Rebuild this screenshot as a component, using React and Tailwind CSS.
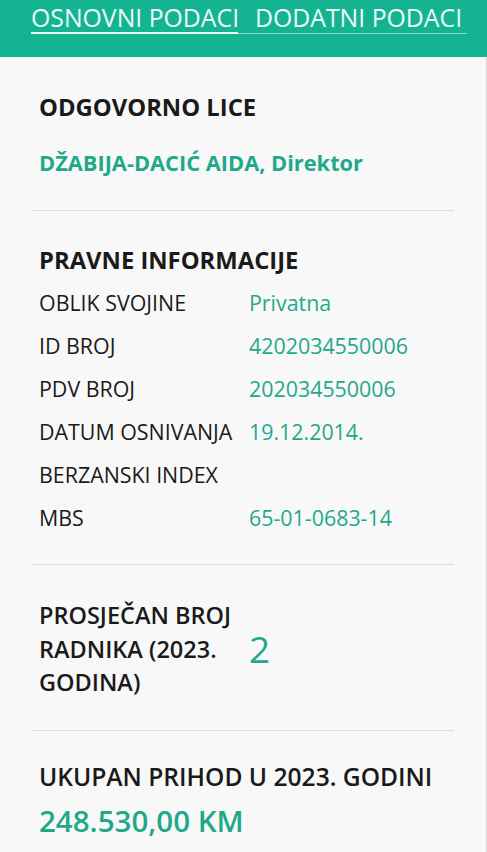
export default function App() {
  const rows = [
    ["OBLIK SVOJINE", "Privatna"],
    ["ID BROJ", "4202034550006"],
    ["PDV BROJ", "202034550006"],
    ["DATUM OSNIVANJA", "19.12.2014."],
    ["BERZANSKI INDEX", ""],
    ["MBS", "65-01-0683-14"],
  ];

  return (
    <div className="h-[852px] w-[487px] overflow-hidden bg-[#f8f8f8] font-['Open_Sans',sans-serif] text-[#1a1a1a]">
      {/* tabs header */}
      <div className="h-[57px] bg-[#14b493] px-[31px] pt-[2px]">
        <div className="flex w-[436px] border-b border-[#8fdcca]">
          <div className="w-[207px] -mb-px border-b-2 border-[#eafaf6] text-[24.8px] leading-[30px] text-[#eafaf6] whitespace-nowrap">
            OSNOVNI PODACI
          </div>
          <div className="ml-[17px] text-[24.8px] leading-[30px] text-[#eafaf6] whitespace-nowrap">
            DODATNI PODACI
          </div>
        </div>
      </div>

      <div className="h-full border-r border-[#d8d8d8] px-[32px]">
        {/* odgovorno lice */}
        <div className="px-[7px] pt-[34px] pb-[31px]">
          <h2 className="text-[23.8px] font-bold leading-[32px]">ODGOVORNO LICE</h2>
          <p className="mt-[24px] text-[21.8px] font-bold leading-[32px] text-[#1fa98b]">
            DŽABIJA-DACIĆ AIDA, Direktor
          </p>
        </div>
        <div className="border-t border-[#dcdcdc]" />

        {/* pravne informacije */}
        <div className="px-[7px] pt-[33px] pb-[24px]">
          <h2 className="text-[23.8px] font-bold leading-[32px]">PRAVNE INFORMACIJE</h2>
          <div className="mt-[6px] flex flex-col">
            {rows.map(([label, value]) => (
              <div key={label} className="flex h-[43px] items-center text-[21.4px]">
                <span className="w-[210px] whitespace-nowrap">{label}</span>
                <span className="text-[#1fa98b]">{value}</span>
              </div>
            ))}
          </div>
        </div>
        <div className="border-t border-[#dcdcdc]" />

        {/* broj radnika */}
        <div className="flex items-center px-[7px] pt-[34px] pb-[30px]">
          <p className="w-[210px] text-[23.5px] font-semibold leading-[33.5px]">
            PROSJEČAN BROJ RADNIKA (2023. GODINA)
          </p>
          <span className="text-[37px] leading-[40px] text-[#1fa98b]">2</span>
        </div>
        <div className="border-t border-[#dcdcdc]" />

        {/* prihod */}
        <div className="px-[7px] pt-[30px]">
          <p className="text-[24.6px] font-semibold leading-[32px] whitespace-nowrap">
            UKUPAN PRIHOD U 2023. GODINI
          </p>
          <p className="mt-[10px] text-[29.5px] font-semibold leading-[36px] text-[#1fa98b]">
            248.530,00 KM
          </p>
        </div>
      </div>
    </div>
  );
}
